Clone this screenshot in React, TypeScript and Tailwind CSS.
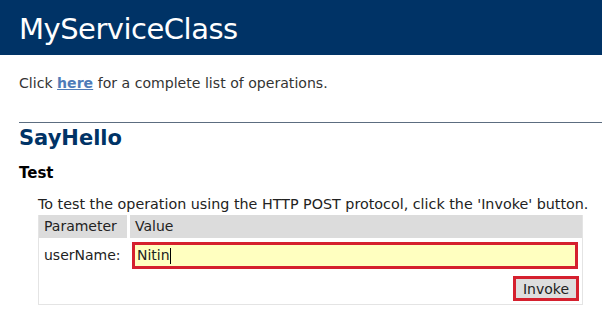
export default function App() {
  return (
    <div className="w-[602px] h-[318px] overflow-hidden bg-white text-[#000] font-['DejaVu_Sans',Verdana,sans-serif]">
      {/* Header */}
      <div className="h-[55px] bg-[#003366] pl-[19px] pt-[12px]">
        <h1 className="text-[29px] leading-[34px] text-white tracking-[-0.5px]">MyServiceClass</h1>
      </div>

      <div className="pl-[19px]">
        <p className="mt-[19px] text-[14.1px] leading-[18px] text-[#333]">
          Click{" "}
          <a href="#" className="font-bold text-[#4f7cb8] underline">
            here
          </a>{" "}
          for a complete list of operations.
        </p>

        <div className="mt-[30px] border-t border-[#5c6d80]">
          <h2 className="mt-[1px] text-[21px] leading-[28px] font-bold text-[#003366]">SayHello</h2>
        </div>

        <h3 className="mt-[12px] text-[15px] leading-[18px] font-bold">Test</h3>

        <div className="pl-[19px] mt-[12px]">
          <p className="text-[14.3px] leading-[20px] text-[#222]">
            To test the operation using the HTTP POST protocol, click the 'Invoke' button.
          </p>
          <div className="w-[545px] mt-[1px] border border-[#e4e4e4] border-t-0 text-[14px] text-[#222]">
            <div className="flex gap-[3px] h-[23px]">
              <div className="w-[88px] bg-[#dcdcdc] pl-[5px] leading-[23px]">Parameter</div>
              <div className="flex-1 bg-[#dcdcdc] pl-[5px] leading-[23px]">Value</div>
            </div>
            <div className="flex items-center mt-[4px]">
              <div className="w-[93px] pl-[5px]">userName:</div>
              <div className="flex-1 pr-[4px]">
                <div className="h-[27px] border-[3px] border-[#d5202e] bg-[#ffffc0] flex items-center pl-[2px] text-[#222]">
                  Nitin<span className="inline-block w-px h-[16px] bg-black" />
                </div>
              </div>
            </div>
            <div className="flex justify-end pr-[3px] mt-[7px] pb-[3px]">
              <button className="h-[25px] px-[7px] border-[3px] border-[#d5202e] bg-[#dedede] text-[14px] text-[#222] leading-[18px]">
                Invoke
              </button>
            </div>
          </div>
        </div>
      </div>
    </div>
  );
}
